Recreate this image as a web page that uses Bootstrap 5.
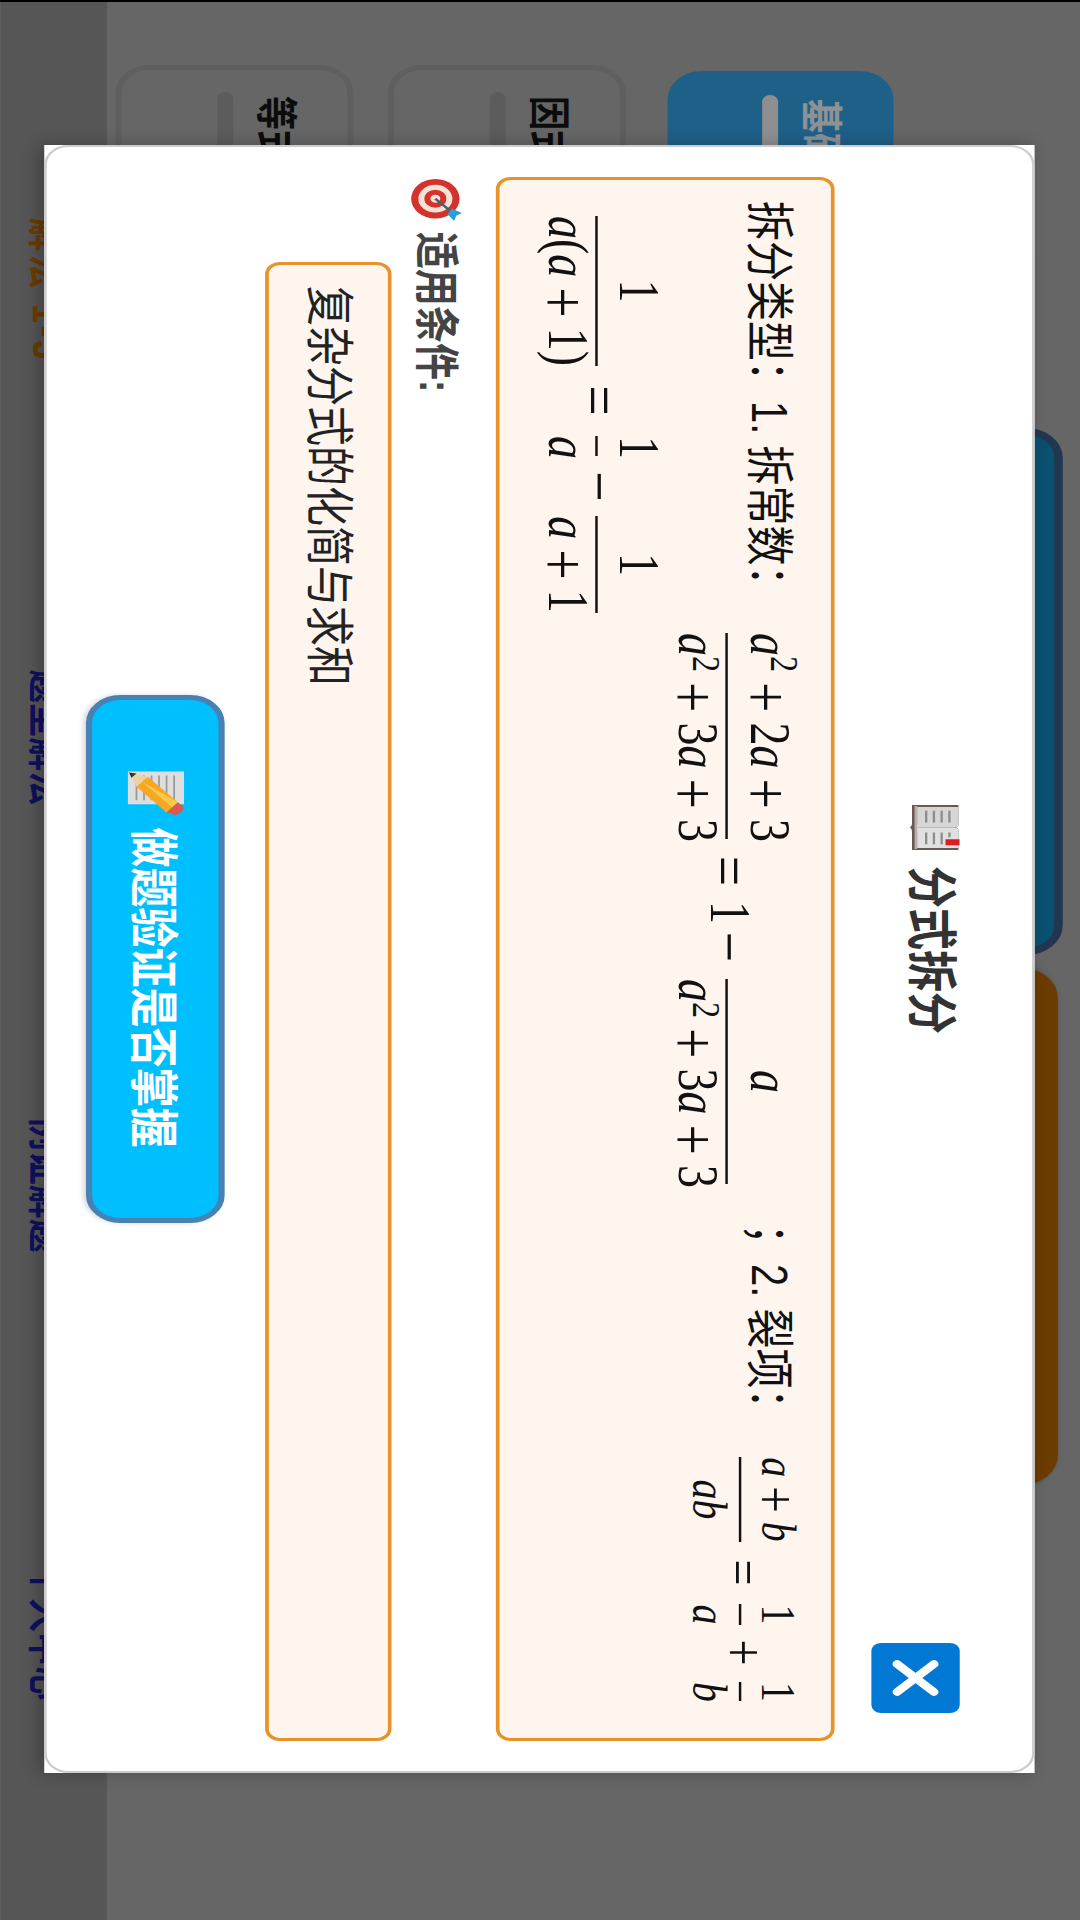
<!DOCTYPE html>
<html lang="zh-CN">
<head>
<meta charset="utf-8">
<title>分式拆分</title>
<link href="https://cdn.jsdelivr.net/npm/bootstrap@5.3.0/dist/css/bootstrap.min.css" rel="stylesheet">
<style>
html,body{margin:0;background:#666}
body{font-family:"Liberation Sans","Noto Sans CJK SC",sans-serif;color:#111}
.frame{width:1080px;height:1920px;overflow:hidden}
.stage{width:1920px;height:880px;transform-origin:0 0;transform:translateX(1080px) rotate(90deg) scaleY(1.2272);position:relative;background:#aaa;border-left:2px solid #000;overflow:hidden}
/* page behind the dialog */
.pagearea{height:793px}
.sidecol{width:420px;padding-left:63px;padding-top:152px}
.tabitem{width:330px;height:194px;border-radius:28px;padding:40px 0 0 26px;font-size:34px;font-weight:700;line-height:36px;margin-bottom:28px;border:5px solid #9e9e9e;color:#151515}
.tabitem.on{background:#34a0e4;border-color:#34a0e4;color:#eef3f8;height:184px;margin-left:6px;margin-bottom:34px;padding-top:36px;padding-left:23px}
.tabbar{height:13px;border-radius:7px;background:#9a9a9a;margin-top:17px;margin-left:-4px;width:260px}
.tabitem.on .tabbar{background:#eee}
.bigcard{width:527px;height:640px;border-radius:30px}
.bc1{background:#1185bb;border:7px solid #395d84;margin-top:14px;margin-left:6px}
.bc2{background:#b26400;width:517px;margin-top:18px;margin-left:13px;box-shadow:0 3px 6px rgba(0,0,0,.4)}
.strip{height:87px;background:#8f8f8f;padding:0 64px;line-height:96px;font-size:34px;font-weight:700;color:#1b1b9c}
.strip>div{width:448px;text-align:center}
.strip .cur{color:#b26400;letter-spacing:3px}
/* dialog */
.dim{position:absolute;inset:0;background:rgba(0,0,0,.4);padding-right:4px}
.sheet{width:1628px;height:807px;background:#fff;box-shadow:0 4px 14px rgba(0,0,0,.25)}
.sheet>.modal-content{height:100%;border:2px solid #ccc;border-radius:20px;background:#fff;padding:30px;color:#222}
.headrow{height:72px;margin-top:29px}
.dlgtitle{font-size:42px;font-weight:700;line-height:48px;color:#333;text-align:center;padding-left:18px}
.dlgtitle svg{width:47px;height:41px;margin-right:15px;vertical-align:-3px}
.closebtn{width:70px;height:72px;padding:0;border:0;border-radius:8px;background:#0078d4;margin-right:28px}
.closebtn svg{display:block;width:70px;height:72px}
.fbox{background:#fef5ef;border:3px solid #e8922a;border-radius:12px;font-size:40px;line-height:60px;color:#111}
.fb1{margin-top:30px;height:276px;padding:20px 21px 0}
.fb2{height:103px;margin-left:85px;padding:18px 21px;color:#222}
.tx1{width:432px;white-space:pre}
.tx2{width:233px;margin-left:40px;white-space:pre}
.mathrow{font-family:"Liberation Serif",serif;font-size:46px;line-height:1;color:#111}
.r2{margin:10px 0 0 15px}
.eq1{margin-top:16px}
.eq3{margin-top:5px;font-size:40px}
.frac{display:flex;flex-direction:column;align-items:center;flex:none}
.num,.den{height:48px;white-space:nowrap;width:100%;text-align:center}
.num{line-height:28px}
.den{line-height:46px;border-top:2px solid #111;height:48px}
.n2 .num{line-height:30px}
.n3 .num{line-height:36px}
.n3 .den{line-height:47px}
.mi{font-style:italic}
.sq{font-size:.7em;position:relative;top:-.48em;line-height:0}
.den .sq{top:-.36em}
.pl{font-size:54px;margin:0 10px;vertical-align:-6px;line-height:0}
.n3 .pl{font-size:47px;margin:0 9px;vertical-align:-5px}
.op{display:flex;justify-content:center;flex:none;font-size:54px;line-height:54px;height:54px;margin-top:-2px}
.eq3 .op{font-size:46px;margin-top:-1px;line-height:50px;height:50px}
.w206{width:206px}.w205{width:205px}.w85{width:85px}.w21{width:21px}.w19{width:19px}.w150{width:150px}.w20{width:20px}.w97{width:97px}
.o1{width:28px;margin-left:18px}
.o2{width:15px;margin-left:20px;font-size:46px!important}
.o3{width:26px;margin-left:14px}
.o4{margin-left:19px}
.o5{width:25px;margin-left:18px}
.o6{width:25px;margin-left:15px}
.o8{width:29px;margin-left:20px}
.o9{width:27px;margin-left:17px}
.ml21{margin-left:21px}.ml19{margin-left:19px}.ml17{margin-left:17px}.ml16{margin-left:16px}
.subhead{font-size:37px;font-weight:700;line-height:60px;color:#444;margin-top:20px;margin-bottom:5px;padding-left:2px}
.subhead svg{width:43px;height:45px;margin-right:10px;vertical-align:-8px}
.gobtn{width:528px;height:113px;margin:33px auto 0;border:5px solid #4682b4;border-radius:28px;background:#00bfff;color:#fff;font-size:40px;font-weight:700;line-height:1;padding:0;box-shadow:0 2px 5px rgba(0,0,0,.15)}
.gobtn svg{width:44px;height:46px;margin-right:13px;vertical-align:-7px}
</style>
</head>
<body>
<div class="frame">
<div class="stage">
  <div class="d-flex pagearea">
    <div class="sidecol">
      <div class="tabitem on">基础题型<div class="tabbar"></div></div>
      <div class="tabitem">因式分解<div class="tabbar"></div></div>
      <div class="tabitem">等式变形<div class="tabbar"></div></div>
    </div>
    <div class="bigcard bc1"></div>
    <div class="bigcard bc2"></div>
  </div>
  <div class="strip d-flex">
    <div class="cur">解法 1-3</div>
    <div>题型解法</div>
    <div>例证解题</div>
    <div>个人中心</div>
  </div>

  <div class="dim d-flex align-items-center justify-content-center">
    <div class="sheet">
      <div class="modal-content">
        <div class="headrow d-flex align-items-start">
          <div class="dlgtitle flex-grow-1">
            <svg viewBox="0 2 48 39" preserveAspectRatio="none" aria-hidden="true"><path d="M1 3h20c2 0 3 1 3 2 0-1 1-2 3-2h20v36H28c-2 0-4 1-4 2 0-1-2-2-4-2H1z" fill="#6a5853"/><path d="M3 3h18c2 0 3 1 3 3v31c-1-1-2-2-4-2H3z" fill="#d6d6d6"/><path d="M45 3H27c-2 0-3 1-3 3v31c1-1 2-2 4-2h17z" fill="#e0e0e0"/><path d="M7 10h12M7 16h12M7 22h12M7 28h12M29 16h12M29 22h12M29 28h12M29 10h5" stroke="#8d8d8d" stroke-width="1.8"/><path d="M36 2h6v11h-6z" fill="#e01b24"/><path d="M2 35h44v2H2z" fill="#b9b1ad"/></svg>分式拆分
          </div>
          <button type="button" class="btn closebtn" aria-label="关闭"><svg viewBox="0 0 70 72"><path d="M21 21l28 30M49 21L21 51" stroke="#fff" stroke-width="7.5" stroke-linecap="round"/></svg></button>
        </div>

        <div class="fbox fb1">
          <div class="d-flex align-items-start">
            <span class="tx1">拆分类型：1. 拆常数：</span>
            <div class="mathrow eq1 d-flex align-items-center">
              <div class="frac w206"><div class="num"><span class="mi">a</span><span class="sq">2</span><span class="pl">+</span>2<span class="mi">a</span><span class="pl">+</span>3</div><div class="den"><span class="mi">a</span><span class="sq">2</span><span class="pl">+</span>3<span class="mi">a</span><span class="pl">+</span>3</div></div>
              <span class="op o1">=</span>
              <span class="op o2">1</span>
              <span class="op o3">−</span>
              <div class="frac w205 o4"><div class="num"><span class="mi">a</span></div><div class="den"><span class="mi">a</span><span class="sq">2</span><span class="pl">+</span>3<span class="mi">a</span><span class="pl">+</span>3</div></div>
            </div>
            <span class="tx2">；2. 裂项：</span>
            <div class="mathrow eq3 d-flex align-items-center">
              <div class="frac w85 n3"><div class="num"><span class="mi">a</span><span class="pl">+</span><span class="mi">b</span></div><div class="den"><span class="mi">ab</span></div></div>
              <span class="op o5">=</span>
              <div class="frac w21 n3 ml19"><div class="num">1</div><div class="den"><span class="mi">a</span></div></div>
              <span class="op o6">+</span>
              <div class="frac w19 n3 ml17"><div class="num">1</div><div class="den"><span class="mi">b</span></div></div>
            </div>
          </div>
          <div class="mathrow r2 d-flex align-items-center n2">
            <div class="frac w150"><div class="num">1</div><div class="den"><span class="mi">a</span>(<span class="mi">a</span><span class="pl">+</span>1)</div></div>
            <span class="op o8">=</span>
            <div class="frac w20 ml21"><div class="num">1</div><div class="den"><span class="mi">a</span></div></div>
            <span class="op o9">−</span>
            <div class="frac w97 ml16"><div class="num">1</div><div class="den"><span class="mi">a</span><span class="pl">+</span>1</div></div>
          </div>
        </div>

        <div class="subhead">
          <svg viewBox="0 0 48 48" aria-hidden="true"><circle cx="22" cy="26" r="22" fill="#d4322c"/><circle cx="22" cy="26" r="15.5" fill="#f3e3d6"/><circle cx="22" cy="26" r="10" fill="#d4322c"/><circle cx="22" cy="26" r="4.5" fill="#f3e3d6"/><path d="M22 26L38 10" stroke="#4f5f6a" stroke-width="2.6"/><path d="M33 11l5-9 3 5 6 2-8 6z" fill="#2a9fd6"/></svg>适用条件:
        </div>

        <div class="fbox fb2">复杂分式的化简与求和</div>

        <button type="button" class="btn gobtn d-block">
          <svg viewBox="0 0 42 45" aria-hidden="true"><path d="M0 0h32v45H0z" fill="#dedede"/><path d="M4 8h24M4 14h24M4 20h24M4 26h24M4 32h24M4 38h24" stroke="#9a9a9a" stroke-width="1.4"/><path d="M30 5l10 9-25 24-10-9z" fill="#f7a823"/><path d="M30 5l5 4.500-25 24z" fill="#fbc94a"/><path d="M5 29l10 9-13 5z" fill="#f0d2a0"/><path d="M2 38l4 4-5 2z" fill="#333"/><path d="M30 5l3-3c2-2 4-2 6 0l2 2c2 2 2 4 0 6l-1 4z" fill="#d9584f"/></svg>做题验证是否掌握
        </button>
      </div>
    </div>
  </div>
</div>
</div>
<script src="https://cdn.jsdelivr.net/npm/bootstrap@5.3.0/dist/js/bootstrap.bundle.min.js"></script>
</body>
</html>
